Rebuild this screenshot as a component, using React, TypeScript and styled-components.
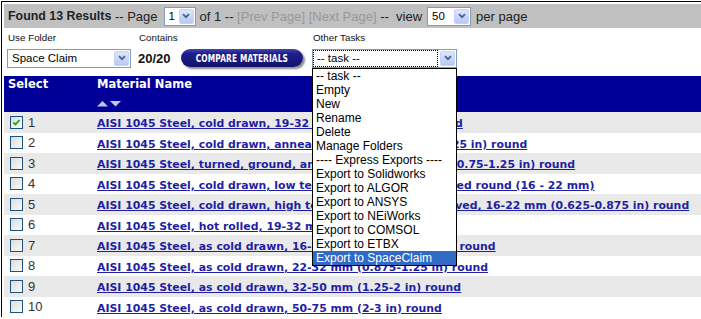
import React from "react";
import styled, { createGlobalStyle } from "styled-components";

const GlobalStyle = createGlobalStyle`
  html, body { margin: 0; padding: 0; background: #fff; overflow: hidden; }
  body { font-family: "Liberation Sans", Arial, sans-serif; }
`;

const Frame = styled.div`
  margin: 1px 0 0 1px;
  border-top: 1px solid #000;
  border-left: 1px solid #000;
  padding: 2px 0 0 2px;
`;

const TopBar = styled.div`
  height: 24px;
  background: #c0c0c0;
  display: flex;
  align-items: center;
  padding-left: 4px;
  font-size: 13px;
  color: #222;
  white-space: pre;
`;

const Found = styled.b`
  font-size: 12.4px;
  font-weight: bold;
`;

const Disabled = styled.span`
  color: #999;
`;

const SelectBox = styled.div<{ $w: number; $ml?: number; $mr?: number }>`
  display: inline-flex;
  box-sizing: border-box;
  width: ${(p) => p.$w}px;
  height: 19px;
  margin-left: ${(p) => p.$ml ?? 0}px;
  margin-right: ${(p) => p.$mr ?? 0}px;
  border: 1px solid #7f9db9;
  background: #fff;
  position: relative;
`;

const SelectText = styled.div<{ $focus?: boolean }>`
  flex: 1;
  display: flex;
  align-items: center;
  padding-left: ${(p) => (p.$focus ? 3 : 4)}px;
  font-size: 11.5px;
  color: #000;
  ${(p) => (p.$focus ? "border: 1px dotted #000; margin: 0 1px 0 0;" : "")}
`;

const SelectButton = styled.div`
  width: 15px;
  margin: 1px;
  box-sizing: border-box;
  border: 1px solid #c3d3fd;
  border-radius: 2px;
  background: linear-gradient(#dce6fe, #b6c9f4);
  display: flex;
  align-items: center;
  justify-content: center;
`;

const Chevron = () => (
  <svg width="8" height="6" viewBox="0 0 8 6">
    <path d="M1 1.2 L4 4.2 L7 1.2" fill="none" stroke="#4d6185" strokeWidth="1.8" />
  </svg>
);

const DropList = styled.div`
  position: absolute;
  top: 18px;
  left: -1px;
  width: 145px;
  box-sizing: border-box;
  border: 1px solid #000;
  background: #fff;
  z-index: 10;
`;

const DropItem = styled.div<{ $active?: boolean }>`
  height: 14px;
  line-height: 14px;
  padding-left: 3px;
  font-size: 12px;
  white-space: pre;
  color: ${(p) => (p.$active ? "#fff" : "#000")};
  background: ${(p) => (p.$active ? "#316ac5" : "transparent")};
`;

type SelProps = {
  w: number;
  value: string;
  ml?: number;
  mr?: number;
  focus?: boolean;
  children?: React.ReactNode;
};

const FakeSelect = ({ w, value, ml, mr, focus, children }: SelProps) => (
  <SelectBox $w={w} $ml={ml} $mr={mr}>
    <SelectText $focus={focus}>{value}</SelectText>
    <SelectButton>
      <Chevron />
    </SelectButton>
    {children}
  </SelectBox>
);

const Filters = styled.div`
  display: flex;
  padding: 3px 0 8px 3px;
`;

const FilterCol = styled.div<{ $w?: number }>`
  display: flex;
  flex-direction: column;
  gap: 3px;
  ${(p) => (p.$w ? `width: ${p.$w}px;` : "")}
`;

const Label = styled.div`
  height: 14px;
  line-height: 14px;
  font-size: 9.8px;
  color: #111;
  padding-left: 1px;
`;

const ControlRow = styled.div`
  display: flex;
  align-items: center;
  height: 20px;
`;

const Count = styled.b`
  font-size: 13px;
  color: #111;
`;

const PillButton = styled.div`
  margin-left: 10px;
  width: 122px;
  height: 18px;
  border-radius: 9px;
  background: linear-gradient(#4646b0 0%, #1f1f8c 25%, #12126e 100%);
  box-shadow: 2px 2px 2px rgba(0, 0, 0, 0.45);
  color: #fff;
  display: flex;
  align-items: center;
  justify-content: center;
  overflow: hidden;
`;

const PillText = styled.span`
  display: inline-block;
  white-space: nowrap;
  font-family: "DejaVu Sans", Verdana, sans-serif;
  font-weight: bold;
  font-size: 10.6px;
  letter-spacing: 0.2px;
  transform: scaleX(0.7);
`;

const Table = styled.table`
  width: 100%;
  border-collapse: collapse;
  table-layout: fixed;
`;

const HeadRow = styled.tr`
  background: #000099;
  height: 36px;
`;

const Th = styled.th<{ $w?: number }>`
  ${(p) => (p.$w ? `width: ${p.$w}px;` : "")}
  text-align: left;
  vertical-align: top;
  padding: 1px 4px 0;
  font-family: "DejaVu Sans", Verdana, sans-serif;
  font-weight: bold;
  font-size: 11.5px;
  line-height: 14px;
  color: #fff;
`;

const SortArrows = styled.div`
  margin-top: 10px;
  height: 6px;
  display: flex;
`;

const Row = styled.tr<{ $alt: boolean }>`
  background: ${(p) => (p.$alt ? "#e9e9e9" : "#fff")};
  height: 20.5px;
`;

const Td = styled.td`
  padding: 0 4px;
  vertical-align: middle;
  white-space: nowrap;
  overflow: hidden;
`;

const SelCell = styled.div`
  display: flex;
  align-items: center;
  padding-left: 2px;
`;

const CheckBox = styled.div`
  width: 13px;
  height: 13px;
  box-sizing: border-box;
  border: 1px solid #1c5180;
  background: linear-gradient(135deg, #dcdcd7, #fbfbf9);
  display: flex;
  align-items: center;
  justify-content: center;
`;

const Num = styled.span`
  margin-left: 5px;
  font-size: 13px;
  color: #333;
`;

const MatLink = styled.a`
  font-family: "DejaVu Sans", Verdana, sans-serif;
  font-weight: bold;
  font-size: 10.9px;
  color: #1f1fa4;
  text-decoration: underline;
`;

const materials = [
  "AISI 1045 Steel, cold drawn, 19-32 mm (0.75-1.25 in) round",
  "AISI 1045 Steel, cold drawn, annealed, 19-32 mm (0.75-1.25 in) round",
  "AISI 1045 Steel, turned, ground, and polished, 19-32 mm (0.75-1.25 in) round",
  "AISI 1045 Steel, cold drawn, low temperature stress relieved round (16 - 22 mm)",
  "AISI 1045 Steel, cold drawn, high temperature stress relieved, 16-22 mm (0.625-0.875 in) round",
  "AISI 1045 Steel, hot rolled, 19-32 mm (0.75-1.25 in) round",
  "AISI 1045 Steel, as cold drawn, 16-22 mm (0.625-0.875 in) round",
  "AISI 1045 Steel, as cold drawn, 22-32 mm (0.875-1.25 in) round",
  "AISI 1045 Steel, as cold drawn, 32-50 mm (1.25-2 in) round",
  "AISI 1045 Steel, as cold drawn, 50-75 mm (2-3 in) round",
];

const tasks = [
  "-- task --",
  "Empty",
  "New",
  "Rename",
  "Delete",
  "Manage Folders",
  "---- Express Exports ----",
  "Export to Solidworks",
  "Export to ALGOR",
  "Export to ANSYS",
  "Export to NEiWorks",
  "Export to COMSOL",
  "Export to ETBX",
  "Export to SpaceClaim",
];

export default function App() {
  return (
    <>
      <GlobalStyle />
      <Frame>
        <TopBar>
          <Found>Found 13 Results</Found>
          <span> -- Page</span>
          <FakeSelect w={32} value="1" ml={6} mr={4} />
          <span>of 1 -- </span>
          <Disabled>[Prev Page] [Next Page]</Disabled>
          <span> --  view</span>
          <FakeSelect w={44} value="50" ml={5} mr={5} />
          <span>per page</span>
        </TopBar>
        <Filters>
          <FilterCol $w={131}>
            <Label>Use Folder</Label>
            <ControlRow>
              <FakeSelect w={124} value="Space Claim" />
            </ControlRow>
          </FilterCol>
          <FilterCol $w={174}>
            <Label>Contains</Label>
            <ControlRow>
              <Count>20/20</Count>
              <PillButton>
                <PillText>COMPARE MATERIALS</PillText>
              </PillButton>
            </ControlRow>
          </FilterCol>
          <FilterCol>
            <Label>Other Tasks</Label>
            <ControlRow>
              <FakeSelect w={145} value="-- task --" focus>
                <DropList>
                  {tasks.map((t, i) => (
                    <DropItem key={t} $active={i === tasks.length - 1}>
                      {t}
                    </DropItem>
                  ))}
                </DropList>
              </FakeSelect>
            </ControlRow>
          </FilterCol>
        </Filters>
        <Table>
          <thead>
            <HeadRow>
              <Th $w={81}>Select</Th>
              <Th>
                Material Name
                <SortArrows>
                  <svg width="26" height="6" viewBox="0 0 26 6">
                    <polygon points="0,5.5 5.5,0 11,5.5" fill="#c4c4e4" />
                    <polygon points="13,0 24,0 18.5,5.5" fill="#c4c4e4" />
                  </svg>
                </SortArrows>
              </Th>
            </HeadRow>
          </thead>
          <tbody>
            {materials.map((m, i) => (
              <Row key={i} $alt={i % 2 === 0}>
                <Td>
                  <SelCell>
                    <CheckBox>
                      {i === 0 && (
                        <svg width="9" height="9" viewBox="0 0 9 9">
                          <path d="M1.5 4.5 L3.5 6.5 L7.5 2" fill="none" stroke="#21a121" strokeWidth="1.8" />
                        </svg>
                      )}
                    </CheckBox>
                    <Num>{i + 1}</Num>
                  </SelCell>
                </Td>
                <Td>
                  <MatLink href="#">{m}</MatLink>
                </Td>
              </Row>
            ))}
          </tbody>
        </Table>
      </Frame>
    </>
  );
}
